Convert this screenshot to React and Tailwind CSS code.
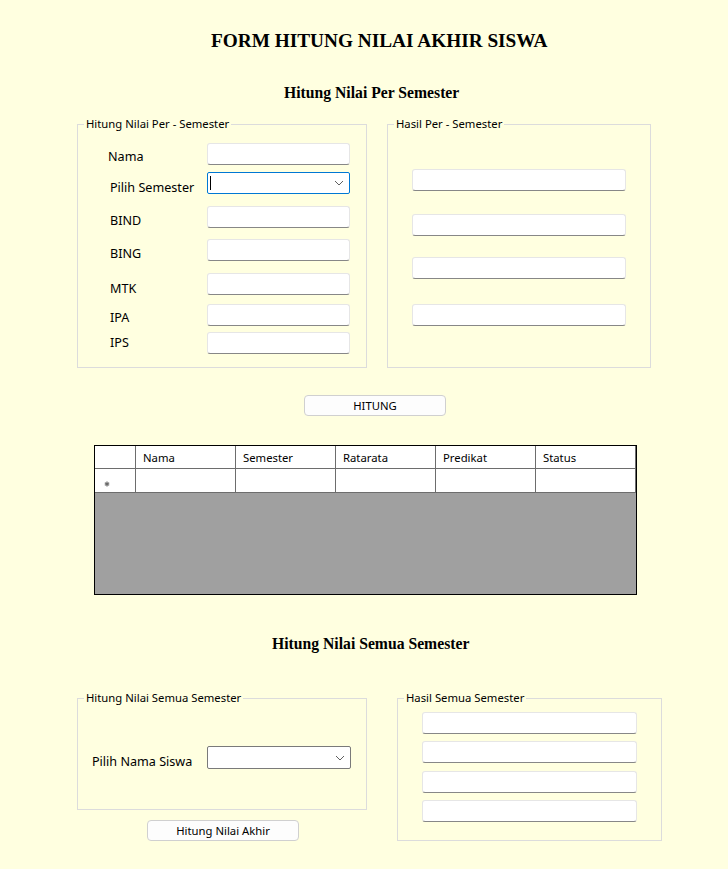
import React from "react";

const ui = { fontFamily: '"Noto Sans", "Open Sans", sans-serif' };
const serif = { fontFamily: '"Liberation Serif", "Times New Roman", serif' };

function TextBox({ className = "" }) {
  return (
    <div
      className={
        "h-[22px] bg-white border border-[#e6e6e6] border-b-[#878787] rounded-[3px] " +
        className
      }
    />
  );
}

function Chevron() {
  return (
    <svg width="10" height="6" viewBox="0 0 10 6" className="absolute right-[5px] top-1/2 -translate-y-1/2">
      <path d="M1 1 L5 5 L9 1" fill="none" stroke="#606060" strokeWidth="1" />
    </svg>
  );
}

function GroupBox({ title, className = "", children }) {
  return (
    <div className={"relative border border-[#dcdcdc] " + className}>
      <span className="absolute left-[6px] top-[-9px] bg-[#ffffe0] px-[2px] text-[11.3px] leading-[16px] text-black">
        {title}
      </span>
      {children}
    </div>
  );
}

const perRows = [
  { label: "Nama", row: "mt-[18px]", lab: "pl-[30px] pt-[5px]" },
  { label: "Pilih Semester", row: "mt-[7px]", lab: "pl-[32px] pt-[7px]", combo: true },
  { label: "BIND", row: "mt-[12px]", lab: "pl-[32px] pt-[6px]" },
  { label: "BING", row: "mt-[11px]", lab: "pl-[32px] pt-[6px]" },
  { label: "MTK", row: "mt-[12px]", lab: "pl-[32px] pt-[7px]" },
  { label: "IPA", row: "mt-[9px]", lab: "pl-[32px] pt-[5px]" },
  { label: "IPS", row: "mt-[6px]", lab: "pl-[32px] pt-[2px]" },
];

const cols = ["Nama", "Semester", "Ratarata", "Predikat", "Status"];

export default function App() {
  return (
    <div className="w-[728px] h-[869px] bg-[#ffffe0] overflow-hidden text-black" style={ui}>
      <div className="pt-[29px] pl-[211px] text-[19.3px] leading-[23px] font-bold whitespace-nowrap" style={serif}>
        FORM HITUNG NILAI AKHIR SISWA
      </div>
      <div className="mt-[32px] pl-[284px] text-[15.7px] leading-[18px] font-bold whitespace-nowrap" style={serif}>
        Hitung Nilai Per Semester
      </div>

      <div className="mt-[22px] ml-[77px] flex gap-[20px]">
        <GroupBox title="Hitung Nilai Per - Semester" className="w-[290px] h-[244px]">
          {perRows.map((r) => (
            <div key={r.label} className={"flex h-[22px] " + r.row}>
              <div className={"w-[129px] text-[12.6px] leading-[18px] whitespace-nowrap " + r.lab}>{r.label}</div>
              {r.combo ? (
                <div className="relative w-[143px] h-[22px] bg-white border border-[#0078d4] rounded-[2px]">
                  <div className="absolute left-[2px] top-[3px] w-[1px] h-[14px] bg-black" />
                  <Chevron />
                </div>
              ) : (
                <TextBox className="w-[143px]" />
              )}
            </div>
          ))}
        </GroupBox>

        <GroupBox title="Hasil Per - Semester" className="w-[264px] h-[244px]">
          <div className="flex flex-col pl-[24px]">
            <TextBox className="w-[214px] mt-[44px]" />
            <TextBox className="w-[214px] mt-[23px]" />
            <TextBox className="w-[214px] mt-[21px]" />
            <TextBox className="w-[214px] mt-[25px]" />
          </div>
        </GroupBox>
      </div>

      <div className="mt-[27px] ml-[304px] w-[142px] h-[21px] bg-[#fdfdfd] border border-[#d0d0d0] rounded-[4px] flex items-center justify-center text-[11.3px] leading-[16px]">
        HITUNG
      </div>

      <div className="mt-[29px] ml-[94px] w-[543px] h-[150px] border border-black flex flex-col bg-[#a0a0a0]">
        <div className="flex h-[23px] bg-white">
          <div className="w-[41px] border-r border-b border-[#6d6d6d]" />
          {cols.map((c) => (
            <div
              key={c}
              className="w-[100px] border-r border-b border-[#6d6d6d] pl-[7px] pt-[2px] text-[11.3px] leading-[20px] whitespace-nowrap"
            >
              {c}
            </div>
          ))}
        </div>
        <div className="flex h-[24px] bg-white">
          <div className="w-[41px] border-r border-b border-[#6d6d6d] flex items-end pl-[9px] pb-[5px]">
            <svg width="6" height="6" viewBox="0 0 6 6">
              <path d="M3 0.5 V5.5 M0.8 1.7 L5.2 4.3 M0.8 4.3 L5.2 1.7" stroke="#6a6a6a" strokeWidth="1.2" />
            </svg>
          </div>
          {cols.map((c) => (
            <div key={c} className="w-[100px] border-r border-b border-[#6d6d6d]" />
          ))}
        </div>
      </div>

      <div className="mt-[40px] pl-[272px] text-[15.7px] leading-[18px] font-bold whitespace-nowrap" style={serif}>
        Hitung Nilai Semua Semester
      </div>

      <div className="mt-[45px] ml-[77px] flex gap-[30px] items-start">
        <div className="flex flex-col">
          <GroupBox title="Hitung Nilai Semua Semester" className="w-[290px] h-[112px]">
            <div className="flex mt-[47px] h-[23px]">
              <div className="w-[129px] pl-[14px] pt-[7px] text-[12.6px] leading-[18px] whitespace-nowrap">Pilih Nama Siswa</div>
              <div className="relative w-[144px] h-[23px] bg-white border border-[#7a7a7a] rounded-[2px]">
                <Chevron />
              </div>
            </div>
          </GroupBox>
          <div className="mt-[10px] ml-[70px] w-[152px] h-[21px] bg-[#fdfdfd] border border-[#d0d0d0] rounded-[4px] flex items-center justify-center text-[11.3px] leading-[16px]">
            Hitung Nilai Akhir
          </div>
        </div>

        <GroupBox title="Hasil Semua Semester" className="w-[265px] h-[143px]">
          <div className="flex flex-col pl-[24px]">
            <TextBox className="w-[215px] mt-[13px]" />
            <TextBox className="w-[215px] mt-[7px]" />
            <TextBox className="w-[215px] mt-[8px]" />
            <TextBox className="w-[215px] mt-[7px]" />
          </div>
        </GroupBox>
      </div>
    </div>
  );
}
